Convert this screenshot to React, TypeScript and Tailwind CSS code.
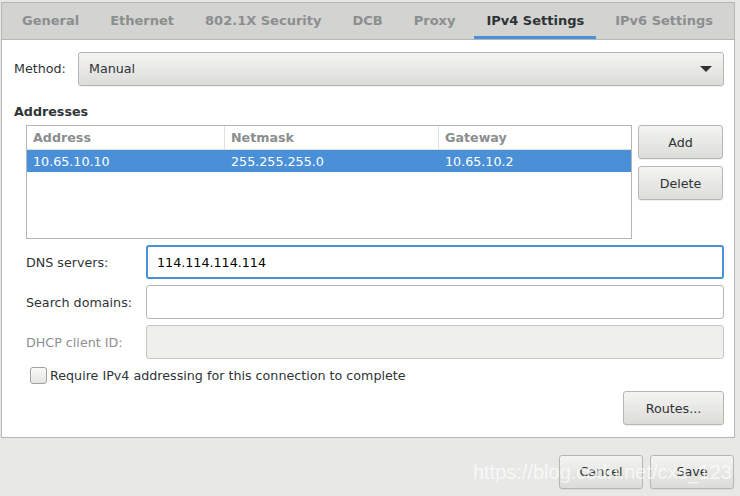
import React from 'react';

const tabs = ['General', 'Ethernet', '802.1X Security', 'DCB', 'Proxy', 'IPv4 Settings', 'IPv6 Settings'];

const btn =
  'flex items-center justify-center rounded-[3px] border border-[#b6b6b3] bg-gradient-to-b from-[#f4f4f2] to-[#dcdcd9] text-[#2e3436] shadow-[0_1px_0_rgba(0,0,0,0.06)]';

function Field({ label, value, focused, disabled }: { label: string; value?: string; focused?: boolean; disabled?: boolean }) {
  return (
    <div className="flex h-[34px] items-center">
      <div className={`w-[120px] ${disabled ? 'text-[#8b8e8f]' : 'text-[#2e3436]'}`}>{label}</div>
      <div
        className={`flex h-[34px] flex-1 items-center rounded-[3px] px-[9px] ${
          focused
            ? 'border-2 border-[#4a90d9] bg-white text-black'
            : disabled
              ? 'border border-[#c6c6c3] bg-[#efefee]'
              : 'border border-[#b6b6b3] bg-white'
        }`}
      >
        {value}
      </div>
    </div>
  );
}

export default function App() {
  return (
    <div
      className="relative h-[496px] w-[740px] overflow-hidden bg-[#e8e8e7] pt-[2px] pl-[1px] text-[12.7px] text-[#2e3436]"
      style={{ fontFamily: '"DejaVu Sans", sans-serif' }}
    >
      <div className="flex h-[436px] w-[734px] flex-col border border-[#b6b6b3] bg-white">
        <div className="flex h-[37px] gap-[7px] border-b border-[#b6b6b3] bg-[#d3d3d1] pl-2 text-[13px]">
          {tabs.map((t) => (
            <div
              key={t}
              className={`flex items-center px-3 pt-[3px] font-bold ${
                t === 'IPv4 Settings' ? 'border-b-[3px] border-[#4a90d9] text-[#2e3436]' : 'border-b-[3px] border-transparent text-[#8b8e8f]'
              }`}
            >
              {t}
            </div>
          ))}
        </div>

        <div className="flex flex-col pt-[12px] pr-[10px] pl-[12px]">
          <div className="flex h-[34px] items-center">
            <div className="w-[64px]">Method:</div>
            <div className={`${btn} h-[34px] flex-1 !justify-between px-[10px]`}>
              <span>Manual</span>
              <svg width="12" height="7" viewBox="0 0 12 7" className="mr-[1px]">
                <path d="M0 0 L12 0 L6 6 Z" fill="#2e3436" />
              </svg>
            </div>
          </div>

          <div className="mt-[16px] font-bold">Addresses</div>

          <div className="mt-[4px] flex gap-[6px] pl-[12px]">
            <div className="h-[114px] w-[606px] border border-[#b6b6b3] bg-white">
              <div className="flex h-[24px] border-b border-[#e0e0df] font-bold text-[#8b8e8f]">
                <div className="flex w-[198px] items-center border-r border-[#e0e0df] pl-[6px]">Address</div>
                <div className="flex w-[214px] items-center border-r border-[#e0e0df] pl-[6px]">Netmask</div>
                <div className="flex flex-1 items-center pl-[6px]">Gateway</div>
              </div>
              <div className="flex h-[22px] bg-[#4a90d9] text-white">
                <div className="flex w-[198px] items-center pl-[6px]">10.65.10.10</div>
                <div className="flex w-[214px] items-center pl-[6px]">255.255.255.0</div>
                <div className="flex flex-1 items-center pl-[6px]">10.65.10.2</div>
              </div>
            </div>
            <div className="flex flex-col gap-[7px]">
              <div className={`${btn} h-[34px] w-[85px]`}>Add</div>
              <div className={`${btn} h-[34px] w-[85px]`}>Delete</div>
            </div>
          </div>

          <div className="mt-[6px] flex flex-col gap-[6px] pl-[12px]">
            <Field label="DNS servers:" value="114.114.114.114" focused />
            <Field label="Search domains:" />
            <Field label="DHCP client ID:" disabled />
          </div>

          <div className="mt-[7px] flex items-center pl-[16px]">
            <div className="h-[17px] w-[17px] rounded-[3px] border border-[#a0a09d] bg-gradient-to-b from-[#fafaf9] to-[#e4e4e2]" />
            <span className="ml-[3px]">Require IPv4 addressing for this connection to complete</span>
          </div>

          <div className="mt-[6px] flex justify-end">
            <div className={`${btn} h-[34px] w-[101px]`}>Routes...</div>
          </div>
        </div>
      </div>

      <div className="mt-[17px] flex justify-end gap-[7px] pr-[6px]">
        <div className={`${btn} h-[34px] w-[84px]`}>Cancel</div>
        <div className={`${btn} h-[34px] w-[84px]`}>Save</div>
      </div>

      <div
        className="absolute top-[457px] right-[8px] text-[20px] text-white/70"
        style={{ fontFamily: '"Liberation Sans", sans-serif' }}
      >
        https://blog.csdn.net/cxs_123
      </div>
    </div>
  );
}
